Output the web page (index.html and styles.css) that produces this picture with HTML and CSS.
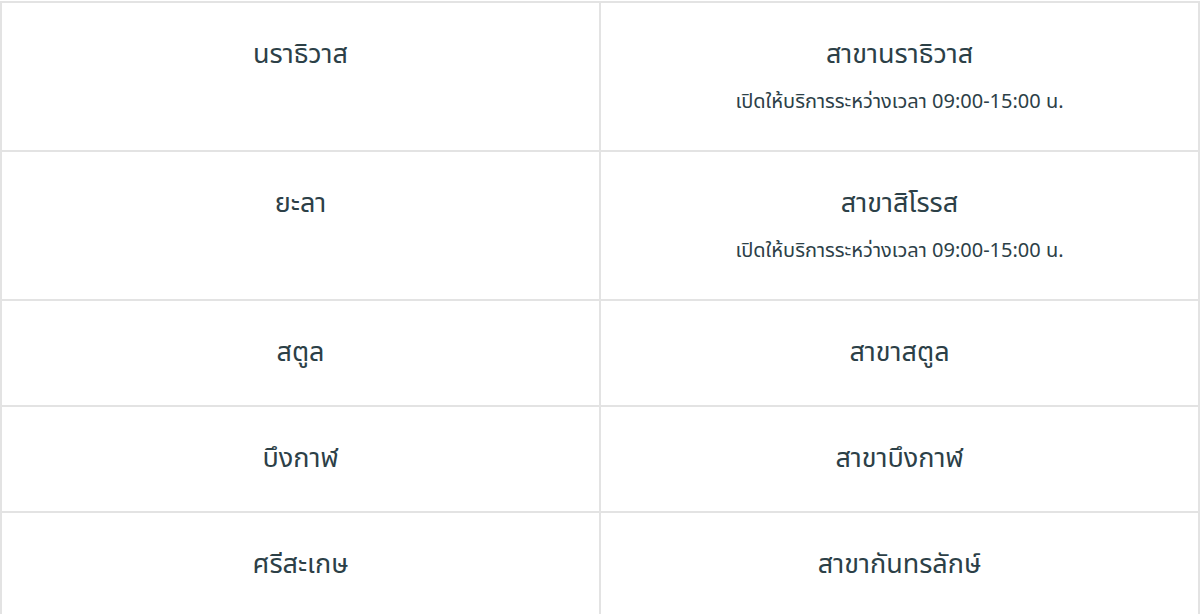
FILE: index.html
```html
<!DOCTYPE html>
<html lang="th">
<head>
<meta charset="utf-8">
<link rel="stylesheet" href="styles.css">
</head>
<body>
<div class="page">
<table class="branches">
  <tbody>
    <tr>
      <td>นราธิวาส</td>
      <td><div class="name">สาขานราธิวาส</div><div class="hours">เปิดให้บริการระหว่างเวลา 09:00-15:00 น.</div></td>
    </tr>
    <tr>
      <td>ยะลา</td>
      <td><div class="name">สาขาสิโรรส</div><div class="hours">เปิดให้บริการระหว่างเวลา 09:00-15:00 น.</div></td>
    </tr>
    <tr>
      <td>สตูล</td>
      <td><div class="name">สาขาสตูล</div></td>
    </tr>
    <tr>
      <td>บึงกาฬ</td>
      <td><div class="name">สาขาบึงกาฬ</div></td>
    </tr>
    <tr>
      <td>ศรีสะเกษ</td>
      <td><div class="name">สาขากันทรลักษ์</div></td>
    </tr>
  </tbody>
</table>
</div>
</body>
</html>
```

FILE: styles.css
```css
html, body {
  margin: 0;
  padding: 0;
  background: #ffffff;
}
.page {
  padding-top: 1px;
}
.branches {
  width: 1200px;
  border-collapse: collapse;
  table-layout: fixed;
  font-family: "Noto Sans Thai", "Noto Sans", "Open Sans", sans-serif;
  color: #2c4047;
}
.branches td {
  border: 2px solid #e3e3e3;
  text-align: center;
  vertical-align: top;
  padding: 32px 10px 33px;
  font-size: 27px;
  line-height: 39px;
}
.name {
  font-size: 27px;
  line-height: 39px;
}
.hours {
  margin-top: 13px;
  font-size: 20px;
  line-height: 30px;
}
```
